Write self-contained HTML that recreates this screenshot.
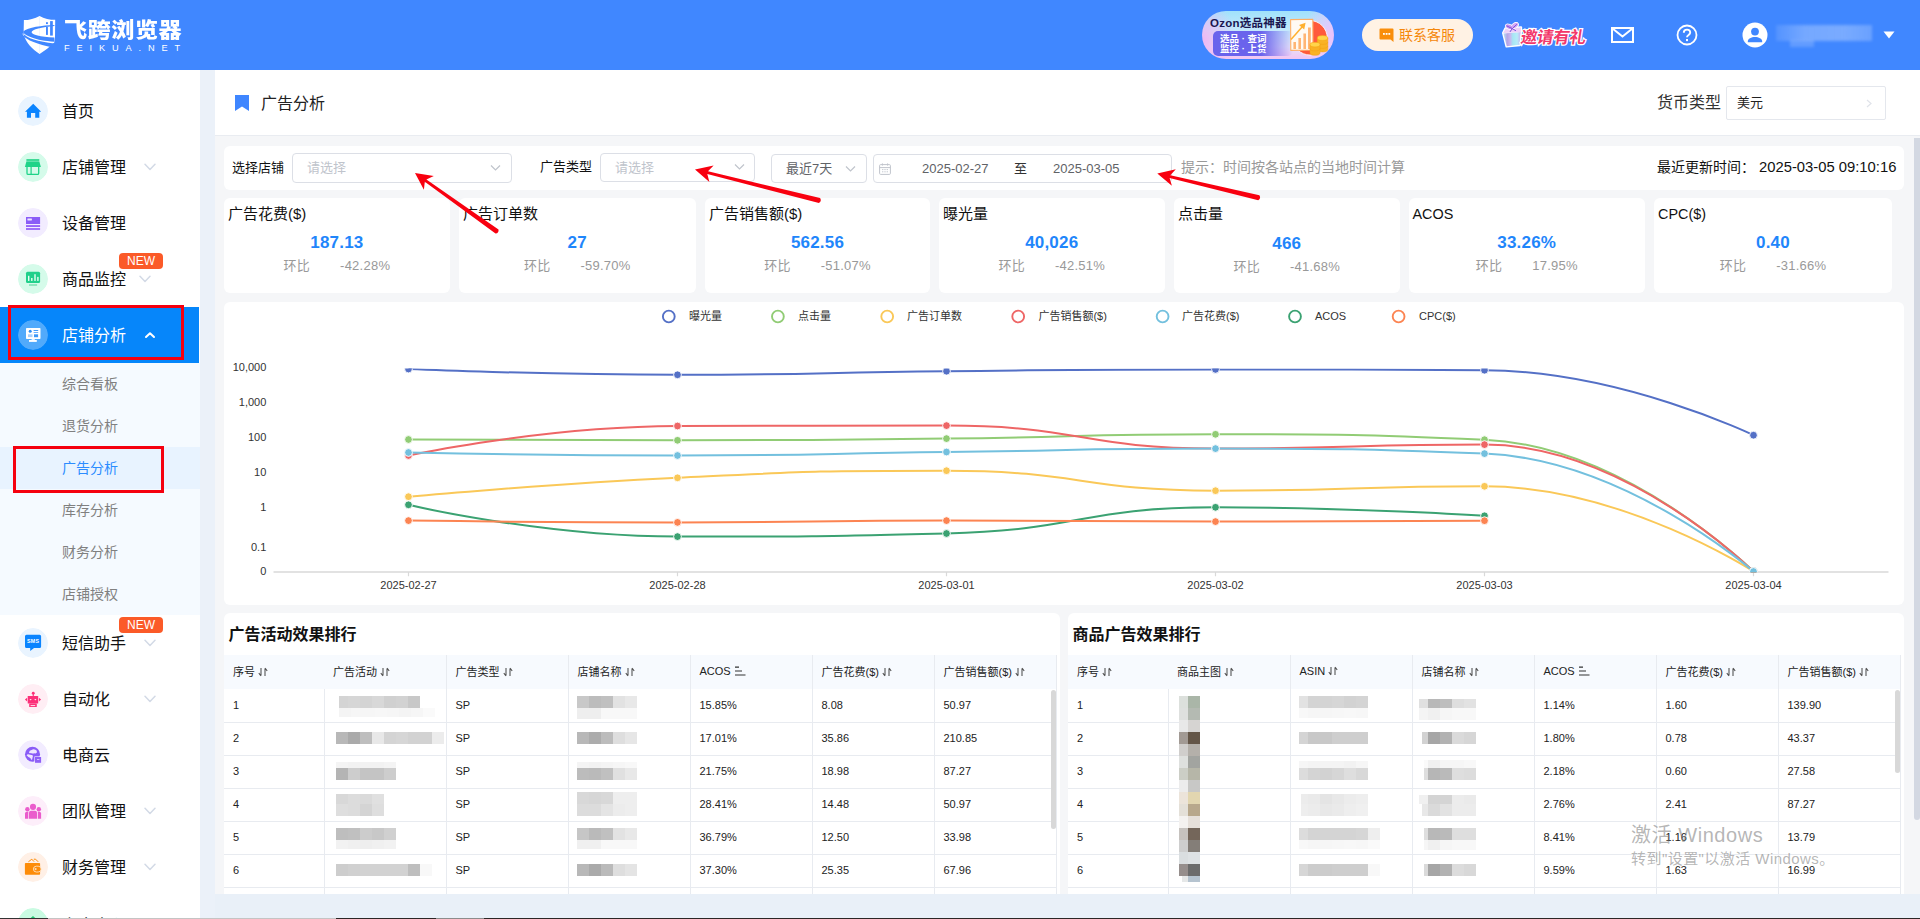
<!DOCTYPE html>
<html lang="zh-CN">
<head>
<meta charset="utf-8">
<title>广告分析</title>
<style>
*{box-sizing:border-box;margin:0;padding:0}
html,body{width:1920px;height:919px;overflow:hidden}
body{position:relative;font-family:"Liberation Sans","Noto Sans CJK SC",sans-serif;background:#f5f6f8;color:#111}
.abs{position:absolute}
#hdr{position:absolute;left:0;top:0;width:1920px;height:70px;background:#4087ff}
#side{position:absolute;left:0;top:70px;width:200px;height:849px;background:#fff;overflow:hidden}
#gap{position:absolute;left:200px;top:70px;width:15px;height:849px;background:#ebf1f9;z-index:5}
#main{position:absolute;left:214px;top:70px;width:1706px;height:849px;background:#f5f6f8;overflow:hidden}
.mi{position:absolute;left:0;width:199px;height:56px}
.mi .ic{position:absolute;left:18px;top:13px;width:30px;height:30px;border-radius:50%}
.mi .tx{position:absolute;left:62px;top:1px;line-height:56px;font-size:16px;color:#111;white-space:nowrap}
.mi .ar{position:absolute;top:22px;width:12px;height:12px}
.smi{position:absolute;left:0;width:200px;height:42px;line-height:43px;font-size:14px;color:#808080;padding-left:62px;white-space:nowrap}
.new{position:absolute;left:119px;width:44px;height:16px;background:#fb5a28;color:#fff;font-size:12px;line-height:17.6px;text-align:center;border-radius:4px}
.card{position:absolute;top:128px;height:95px;background:#fff;border-radius:6px}
.card .t{position:absolute;left:4px;top:6px;font-size:15px;color:#111;white-space:nowrap;line-height:20px}
.card .v{position:absolute;left:0;width:100%;top:34px;text-align:center;font-size:17px;letter-spacing:0.2px;font-weight:bold;color:#1f86fb;line-height:20px}
.card .c{position:absolute;left:0;width:100%;top:58px;text-align:center;font-size:13px;letter-spacing:0.25px;color:#999;line-height:18px;white-space:pre}
.panel{position:absolute;background:#fff;border-radius:6px}
.sel{position:absolute;border:1px solid #dcdfe6;border-radius:4px;background:#fff;font-size:13px;color:#c0c4cc;white-space:nowrap}
.lbl{position:absolute;font-size:13px;color:#111;white-space:nowrap}
table{border-collapse:collapse;table-layout:fixed;font-size:11px;color:#222}
th{height:34px;padding-bottom:3px;background:#f7fafe;text-align:left;padding-left:9px;font-weight:normal;color:#222;border-right:1px solid #e8ebf0;white-space:nowrap}
td{height:33px;padding-left:9px;padding-bottom:1px;border-right:1px solid #e8ebf0;border-bottom:1px solid #e8ebf0;white-space:nowrap;position:relative}
.blur{display:inline-block;vertical-align:middle;background:#d4d4d4;height:12px;filter:blur(1.2px)}
.mos{position:absolute;left:0;top:0;width:0;height:0;filter:blur(0.4px)}
.mos i{position:absolute;display:block}
.srt{display:inline-block;width:10px;height:10px;vertical-align:-1px;margin-left:3px}
</style>
</head>
<body>
<div id="hdr">
  <!-- logo -->
  <svg class="abs" style="left:18px;top:10px" width="44" height="50" viewBox="0 0 44 50">
    <path d="M21.6 5.9 C17 8.6 11 10 5.9 10.1 L5.6 24 C8 33 14 39 21.6 44 C25 42 28.5 39.5 31.5 36.8 L36.3 32.5 L37 27.7 L37.2 9.8 C32 9.8 26 8.6 21.6 5.9 Z" fill="#fff"/>
    <rect x="21.3" y="6" width="0.6" height="38" fill="#e6efff"/>
    <path d="M36.4 15 C24 15.4 10 17.3 5.2 21.6 C5 25 18 31 36.4 31.7 L36.4 27.6 C22 26.8 13.6 24.4 13.6 22.2 C13.6 19.6 24 17 36.4 16 Z" fill="#4087ff"/>
    <path d="M4 22.6 C9 28.5 20 32 36.4 33.4 L36.4 34.6 L34.6 37.4 C20 34.6 8.5 30.5 4 24.6 Z" fill="#4087ff"/>
    <path d="M4.2 23.2 C4.6 24.6 5.4 25.6 6.4 26.6 L5.6 24.4 Z" fill="#fff"/>
    <rect x="28" y="12.2" width="1.9" height="1.9" fill="#4087ff"/><rect x="28" y="16.9" width="1.9" height="8" fill="#4087ff"/>
    <rect x="32.1" y="11.1" width="2.7" height="14.5" fill="#4087ff"/>
  </svg>
  <div class="abs" style="left:63.5px;top:13.5px;font-size:21px;font-weight:900;color:#fff;letter-spacing:0.5px;line-height:28px;transform:scaleX(1.1);transform-origin:0 0;white-space:nowrap;font-family:'Noto Sans CJK SC','Liberation Sans',sans-serif">飞跨浏览器</div>
  <div class="abs" style="left:64px;top:42px;font-size:9.2px;color:#fff;letter-spacing:6.9px;line-height:12px;white-space:nowrap">FEIKUA.NET</div>

  <!-- ozon banner -->
  <div class="abs" style="left:1202px;top:11px;width:132px;height:48px;border-radius:24px;background:radial-gradient(ellipse 34px 44px at 0% 62%,#efb6f2 0%,rgba(239,182,242,0) 100%),radial-gradient(ellipse 30px 44px at 100% 50%,#ecc0fa 0%,rgba(236,192,250,0) 100%),linear-gradient(180deg,#a0e2fb 0%,#c4e8fc 40%,#e6e2fa 75%,#f2c4f2 100%);overflow:hidden">
    <div class="abs" style="left:8px;top:4.5px;font-size:11.5px;font-weight:bold;color:#1b1650;white-space:nowrap;line-height:14px;letter-spacing:0.25px">Ozon选品神器</div>
    <div class="abs" style="left:11px;top:20px;width:80px;height:25px;border-radius:5px;background:linear-gradient(90deg,#6a63ec 0%,#6a63ec 60%,rgba(140,140,240,0) 100%)"></div>
    <div class="abs" style="left:18px;top:22.7px;font-size:9.5px;font-weight:bold;color:#fff;white-space:nowrap;line-height:10.7px">选品 · 查词<br>监控 · 上货</div>
    <svg class="abs" style="left:84px;top:5px" width="46" height="42" viewBox="0 0 46 42">
      <circle cx="24" cy="21.8" r="17.2" fill="#ff5a3c" stroke="#fff" stroke-width="0.8"/>
      <path d="M4.6 3.6 L26.8 3.2 L27 34 L4.8 34.4 Z" fill="#fffaf4" stroke="#ffb066" stroke-width="1.1" stroke-linejoin="round"/>
      <rect x="7.4" y="26" width="2.6" height="7" fill="#ffb574"/><rect x="12.4" y="22" width="2.6" height="11" fill="#ffb574"/><rect x="17.4" y="17.5" width="2.6" height="15.5" fill="#ffb574"/><rect x="22" y="11.5" width="2.8" height="21.5" fill="#ffb574"/>
      <path d="M5 23.5 L16.5 10.5" stroke="#ffb02e" stroke-width="1.5" fill="none"/><path d="M13 9 L19.6 6.8 L18.2 13.4 Z" fill="#ffb02e"/>
      <g fill="#f9b224" stroke="#f5a010" stroke-width="0.5">
        <path d="M31.3 22 V33.5 A5.25 2.4 0 0 0 41.8 33.5 V22 Z"/><ellipse cx="36.55" cy="22" rx="5.25" ry="2.4" fill="#ffd54a"/>
        <path d="M31.3 26 A5.25 2.4 0 0 0 41.8 26 M31.3 30 A5.25 2.4 0 0 0 41.8 30" fill="none"/>
        <path d="M24 28.6 V37 A5 2.3 0 0 0 34 37 V28.6 Z"/><ellipse cx="29" cy="28.6" rx="5" ry="2.3" fill="#ffd54a"/>
        <path d="M24 32.6 A5 2.3 0 0 0 34 32.6" fill="none"/>
      </g>
    </svg>
  </div>

  <!-- contact -->
  <div class="abs" style="left:1362px;top:19px;width:111px;height:32px;border-radius:16px;background:#fff2e4">
    <svg class="abs" style="left:17px;top:9px" width="15" height="15" viewBox="0 0 15 15"><path d="M1.5 0.5 H13.5 Q14.5 0.5 14.5 1.5 V14 L11.5 11.5 H1.5 Q0.5 11.5 0.5 10.5 V1.5 Q0.5 0.5 1.5 0.5 Z" fill="#f98e0c"/><rect x="4" y="5" width="1.8" height="1.8" fill="#fff"/><rect x="6.7" y="5" width="1.8" height="1.8" fill="#fff"/><rect x="9.4" y="5" width="1.8" height="1.8" fill="#fff"/></svg>
    <div class="abs" style="left:37px;top:0;line-height:32px;font-size:14px;color:#f5870a;white-space:nowrap">联系客服</div>
  </div>

  <!-- invite -->
  <svg class="abs" style="left:1500px;top:22px" width="24" height="26" viewBox="0 0 24 26">
    <defs><linearGradient id="gb" x1="0" y1="0" x2="1" y2="0"><stop offset="0" stop-color="#b9e6f6"/><stop offset="0.22" stop-color="#b4a4e6"/><stop offset="0.4" stop-color="#c9b6f0"/><stop offset="0.55" stop-color="#a6e6f4"/><stop offset="0.8" stop-color="#b6ecf8"/><stop offset="1" stop-color="#c8b4f2"/></linearGradient></defs>
    <path d="M3.2 11 L5.4 6.4 L21 5.4 L20.8 10.4 L19.8 23 L6.6 24.4 Z" fill="#fff" stroke="#fff" stroke-width="2.4" stroke-linejoin="round"/>
    <path d="M3.4 11.4 L20.6 10 L19.6 22.8 L6.8 24.2 Z" fill="url(#gb)"/>
    <path d="M3.2 11 L5.6 6.4 L21 5.4 L20.7 10.2 Z" fill="#ecd0f8"/>
    <g stroke="#fff" stroke-width="1.6"><ellipse cx="9" cy="4.6" rx="3.4" ry="2" transform="rotate(22 9 4.6)" fill="#c596f2"/><ellipse cx="15" cy="3.4" rx="3.4" ry="2.1" transform="rotate(-32 15 3.4)" fill="#c596f2"/></g>
    <ellipse cx="9" cy="4.6" rx="3.4" ry="2" transform="rotate(22 9 4.6)" fill="#c596f2"/><ellipse cx="15" cy="3.4" rx="3.4" ry="2.1" transform="rotate(-32 15 3.4)" fill="#d2a8f6"/>
    <path d="M7 4 L12.2 6.6 L16.6 2.6 M12.2 6.6 L10.2 9.6 M12.2 6.6 L15.6 8.6" stroke="#7d4fdc" stroke-width="1" fill="none" stroke-linecap="round"/>
  </svg>
  <div class="abs" style="left:1521px;top:22.5px;font-size:16.5px;font-weight:bold;transform:skewX(-9deg);color:#f2386a;white-space:nowrap;line-height:26px;letter-spacing:-0.2px;-webkit-text-stroke:2.4px #fff;paint-order:stroke fill;font-family:'Noto Sans CJK SC',sans-serif">邀请有礼</div>

  <!-- mail -->
  <svg class="abs" style="left:1611px;top:27px" width="23" height="16" viewBox="0 0 23 16"><rect x="1" y="1" width="21" height="14" fill="none" stroke="#fff" stroke-width="2"/><path d="M1.5 1.5 L11.5 9.5 L21.5 1.5" fill="none" stroke="#fff" stroke-width="2"/></svg>
  <!-- help -->
  <svg class="abs" style="left:1675.6px;top:24px" width="22" height="22" viewBox="0 0 22 22"><circle cx="11" cy="11" r="9.5" fill="none" stroke="#fff" stroke-width="1.8"/><path d="M7.8 8.7 C7.8 4.6 14.2 4.6 14.2 8.5 C14.2 11 11 10.8 11 13.3" fill="none" stroke="#fff" stroke-width="1.9"/><rect x="10" y="15" width="2" height="2.1" fill="#fff"/></svg>
  <!-- avatar -->
  <svg class="abs" style="left:1742px;top:22px" width="26" height="26" viewBox="0 0 26 26"><circle cx="13" cy="13" r="12.5" fill="#fff"/><circle cx="13" cy="9.6" r="3.9" fill="#4087ff"/><path d="M5.8 19.5 C5.8 13.5 20.2 13.5 20.2 19.5 V20.3 H5.8 Z" fill="#4087ff"/></svg>
  <div class="abs" style="left:1776px;top:25px;width:96px;height:16px;background:linear-gradient(90deg,rgba(255,255,255,0.1),rgba(255,255,255,0.28) 30%,rgba(255,255,255,0.3) 70%,rgba(255,255,255,0.22));filter:blur(1.5px)"></div>
  <div class="abs" style="left:1790px;top:40px;width:24px;height:7px;background:rgba(255,255,255,0.18);filter:blur(1.5px)"></div>
  <svg class="abs" style="left:1883px;top:31px" width="12" height="8" viewBox="0 0 12 8"><path d="M0.5 0.5 H11.5 L6 7.5 Z" fill="#fff"/></svg>
</div>
<div id="side">
<div class="abs" style="left:0;top:293px;width:200px;height:252px;background:#f5faff"></div>
<div class="abs" style="left:0;top:377px;width:200px;height:42px;background:#e8f3ff"></div>
<div class="mi" style="top:13px"><svg class="ic" viewBox="0 0 30 30"><circle cx="15" cy="15" r="15" fill="#e9f4ff"/><path d="M15.25 7.7 L23.2 15.8 H21.3 V21.8 H17.2 V17 H13 V21.8 H8.9 V15.8 H7 Z" fill="#0a84ff"/></svg><div class="tx">首页</div></div>
<div class="mi" style="top:69px"><svg class="ic" viewBox="0 0 30 30"><circle cx="15" cy="15" r="15" fill="#d5fbea"/><rect x="8.4" y="7" width="12.9" height="2.3" fill="#3fd996"/><path d="M8.4 9.6 H21.3 L22.9 15 H6.9 Z" fill="#1fd388"/><path d="M9 15 V21.2 Q9 22.4 10.2 22.4 H19.5 Q20.7 22.4 20.7 21.2 V15" fill="none" stroke="#1fd388" stroke-width="1.3"/><rect x="12.5" y="15" width="1.2" height="7.4" fill="#1fd388"/></svg><div class="tx">店铺管理</div><svg class="ar" style="left:144px" viewBox="0 0 12 12"><path d="M1 3.2 L6 8.5 L11 3.2" fill="none" stroke="#d3dae6" stroke-width="1.5" stroke-linecap="round" stroke-linejoin="round"/></svg></div>
<div class="mi" style="top:125px"><svg class="ic" viewBox="0 0 30 30"><circle cx="15" cy="15" r="15" fill="#f2ecff"/><rect x="8" y="9" width="14.1" height="7" fill="#8a5cf7"/><rect x="9.4" y="10.4" width="4.5" height="2.1" rx="0.4" fill="#ece3ff"/><rect x="8" y="17.1" width="14.1" height="1.9" fill="#9663f8"/><rect x="8" y="20.1" width="14.1" height="1.8" fill="#9663f8"/></svg><div class="tx">设备管理</div></div>
<div class="mi" style="top:181px"><svg class="ic" viewBox="0 0 30 30"><circle cx="15" cy="15" r="15" fill="#d5fbea"/><rect x="8" y="7.8" width="14.1" height="11.2" rx="1.5" fill="#21d08b"/><rect x="10" y="11.8" width="1.4" height="5.1" fill="#eafff4"/><rect x="13.1" y="14" width="1.4" height="2.9" fill="#eafff4"/><rect x="16.3" y="10.2" width="1.4" height="6.7" fill="#eafff4"/><rect x="19.2" y="12.9" width="1.4" height="4" fill="#eafff4"/><rect x="11" y="20.2" width="8.1" height="1.6" fill="#7fe0b5"/></svg><div class="tx">商品监控</div><svg class="ar" style="left:139px" viewBox="0 0 12 12"><path d="M1 3.2 L6 8.5 L11 3.2" fill="none" stroke="#d3dae6" stroke-width="1.5" stroke-linecap="round" stroke-linejoin="round"/></svg><div class="new" style="top:2px">NEW</div></div>
<div class="mi" style="top:237px;background:#0686fa"><svg class="ic" viewBox="0 0 30 30"><circle cx="15" cy="15" r="15" fill="rgba(255,255,255,0.3)"/><rect x="8" y="8" width="14.5" height="11" rx="0.8" fill="#fff"/><circle cx="12.2" cy="11.3" r="1.5" fill="#2f8ff5"/><rect x="15.6" y="10.1" width="4.6" height="0.9" fill="#2f8ff5"/><rect x="15.6" y="12" width="4.6" height="0.9" fill="#5aa9ff"/><rect x="10" y="14.3" width="4.5" height="2.8" fill="#a9d0fb"/><rect x="16" y="14.3" width="4.1" height="2.9" fill="#3d97f6"/><rect x="13.6" y="19" width="3.2" height="1.2" fill="#e6f2ff"/><rect x="11" y="20" width="7.8" height="1.9" fill="#fff"/></svg><div class="tx" style="color:#fff">店铺分析</div><svg class="ar" style="left:144px" viewBox="0 0 12 12"><path d="M2 8 L6 4.2 L10 8" fill="none" stroke="#fff" stroke-width="2" stroke-linecap="round" stroke-linejoin="round"/></svg></div>
<div class="mi" style="top:545px"><svg class="ic" viewBox="0 0 30 30"><circle cx="15" cy="15" r="15" fill="#e9f4ff"/><path d="M8.5 6.8 H21.6 Q23.1 6.8 23.1 8.3 V18.5 Q23.1 20 21.6 20 H16 L12.2 23.1 V20 H8.5 Q7 20 7 18.5 V8.3 Q7 6.8 8.5 6.8 Z" fill="#0a84ff"/><text x="15.2" y="15.4" font-size="5.3" font-weight="bold" fill="#fff" text-anchor="middle" font-family="Liberation Sans,sans-serif" letter-spacing="0.3">SMS</text></svg><div class="tx">短信助手</div><svg class="ar" style="left:144px" viewBox="0 0 12 12"><path d="M1 3.2 L6 8.5 L11 3.2" fill="none" stroke="#d3dae6" stroke-width="1.5" stroke-linecap="round" stroke-linejoin="round"/></svg><div class="new" style="top:2px">NEW</div></div>
<div class="mi" style="top:601px"><svg class="ic" viewBox="0 0 30 30"><circle cx="15" cy="15" r="15" fill="#ffeef4"/><circle cx="15.25" cy="9.2" r="1.45" fill="#fc2f78"/><rect x="14.7" y="10" width="1.1" height="2.4" fill="#fc2f78"/><rect x="9.7" y="12" width="10.5" height="7.5" rx="0.6" fill="#fc2f78"/><path d="M6.9 15.6 L9.15 13.7 V17.5 Z" fill="#fc2f78"/><path d="M23.1 15.6 L20.9 13.7 V17.5 Z" fill="#fc2f78"/><path d="M11.5 14.9 H13.7 L12.6 16.5 Z" fill="#ffe3ec"/><path d="M16.3 14.9 H18.5 L17.4 16.5 Z" fill="#ffe3ec"/><rect x="11.2" y="19.4" width="7.6" height="3.7" rx="0.6" fill="#fc2f78"/><rect x="12.6" y="21.1" width="4.6" height="1" fill="#ffe3ec"/></svg><div class="tx">自动化</div><svg class="ar" style="left:144px" viewBox="0 0 12 12"><path d="M1 3.2 L6 8.5 L11 3.2" fill="none" stroke="#d3dae6" stroke-width="1.5" stroke-linecap="round" stroke-linejoin="round"/></svg></div>
<div class="mi" style="top:657px"><svg class="ic" viewBox="0 0 30 30"><circle cx="15" cy="15" r="15" fill="#f2ecff"/><circle cx="14.5" cy="14.3" r="7.5" fill="#8a5cf7"/><path d="M11 12.6 Q11.2 10.2 13.6 10 Q15.4 8.6 17.4 9.8 Q19.4 10.6 18.9 12.6 Q18 13.8 16.6 13.2 Q14.4 13.9 13 13 Q11.4 13.4 11 12.6 Z" fill="#efe6ff"/><path d="M8.6 15.2 Q9.4 14 11 14.4 L14.6 15.2 Q15.2 16 14.6 17.4 L14 20 Q12.6 19.6 12.4 18 Q10.2 17.4 8.6 15.2 Z" fill="#efe6ff"/><rect x="16.4" y="16.4" width="7.3" height="7" fill="#f2ecff"/><rect x="17" y="17" width="6.1" height="5.8" fill="#8f60f7"/><rect x="19" y="19" width="2.4" height="0.9" fill="#d9c8ff"/></svg><div class="tx">电商云</div></div>
<div class="mi" style="top:713px"><svg class="ic" viewBox="0 0 30 30"><circle cx="15" cy="15" r="15" fill="#fdeefa"/><circle cx="15" cy="10.9" r="3.05" fill="#ea5ccc"/><path d="M11 22.7 V16.7 Q11 14.7 13 14.7 H17 Q19 14.7 19 16.7 V22.7 Z" fill="#ea5ccc"/><circle cx="9.4" cy="13.3" r="2.2" fill="#ea5ccc"/><path d="M7 22.7 V17.6 Q7 15.8 8.8 15.8 H10.3 V22.7 Z" fill="#ea5ccc"/><circle cx="20.8" cy="13.3" r="2.2" fill="#ea5ccc"/><path d="M23.1 22.7 V17.6 Q23.1 15.8 21.3 15.8 H19.8 V22.7 Z" fill="#ea5ccc"/></svg><div class="tx">团队管理</div><svg class="ar" style="left:144px" viewBox="0 0 12 12"><path d="M1 3.2 L6 8.5 L11 3.2" fill="none" stroke="#d3dae6" stroke-width="1.5" stroke-linecap="round" stroke-linejoin="round"/></svg></div>
<div class="mi" style="top:769px"><svg class="ic" viewBox="0 0 30 30"><circle cx="15" cy="15" r="15" fill="#fff0e6"/><path d="M10.4 9.8 L13.8 7.2 L16 9.6 M15.8 7.2 L17.6 7.2 L20.2 9.8" fill="none" stroke="#fd8c08" stroke-width="1"/><rect x="6.9" y="10.9" width="15.2" height="11.9" rx="0.8" fill="#fd8c08"/><rect x="15.4" y="14.2" width="7.7" height="5.8" rx="2.9" fill="#fd8c08" stroke="#ffe3c4" stroke-width="0.9"/><circle cx="17.6" cy="17.1" r="1.1" fill="#ffd9ae"/></svg><div class="tx">财务管理</div><svg class="ar" style="left:144px" viewBox="0 0 12 12"><path d="M1 3.2 L6 8.5 L11 3.2" fill="none" stroke="#d3dae6" stroke-width="1.5" stroke-linecap="round" stroke-linejoin="round"/></svg></div>
<div class="mi" style="top:825px"><svg class="ic" viewBox="0 0 30 30"><circle cx="15" cy="15" r="15" fill="#c9fbe2"/><path d="M15 8 L7.5 14.8 H22.5 Z" fill="#25c873"/></svg><div class="tx" style="top:2.6px">安全中心</div><svg class="ar" style="left:144px" viewBox="0 0 12 12"><path d="M1 3.2 L6 8.5 L11 3.2" fill="none" stroke="#d3dae6" stroke-width="1.5" stroke-linecap="round" stroke-linejoin="round"/></svg></div>
<div class="smi" style="top:293px">综合看板</div>
<div class="smi" style="top:335px">退货分析</div>
<div class="smi" style="top:377px;color:#2b8cff">广告分析</div>
<div class="smi" style="top:419px">库存分析</div>
<div class="smi" style="top:461px">财务分析</div>
<div class="smi" style="top:503px">店铺授权</div>
</div>
<div class="abs" style="left:8px;top:305px;width:176px;height:55px;border:3px solid #f5000f;z-index:20"></div>
<div class="abs" style="left:13px;top:446px;width:151px;height:47px;border:3px solid #f5000f;z-index:20"></div>
<div id="gap"></div>
<div id="main">
<div class="abs" style="left:0;top:0;width:1706px;height:66px;background:#fff;border-bottom:1px solid #e9ecf1"></div>
<svg class="abs" style="left:21px;top:25px" width="14" height="16" viewBox="0 0 14 16"><path d="M0 0 H14 V16 L7 11.6 L0 16 Z" fill="#3f86ff"/></svg>
<div class="abs" style="left:47px;top:22px;font-size:16px;line-height:24px;color:#222;white-space:nowrap">广告分析</div>
<div class="abs" style="left:1443px;top:21.3px;font-size:16px;line-height:24px;color:#333;white-space:nowrap">货币类型</div>
<div class="sel" style="left:1512px;top:16px;width:160px;height:34px;border-color:#e4e7ed;border-radius:2px;color:#222;font-size:13px;line-height:32px;padding-left:10px">美元<svg class="abs" style="right:13px;top:12px" width="6" height="9" viewBox="0 0 6 9"><path d="M1 1 L5 4.5 L1 8" fill="none" stroke="#e0e3ea" stroke-width="1.2"/></svg></div>
<div class="panel" style="left:10px;top:76px;width:1680px;height:44px"></div>
<div class="lbl" style="left:18px;top:88px;line-height:20px">选择店铺</div>
<div class="sel" style="left:78px;top:83px;width:220px;height:30px;line-height:28px;padding-left:14px">请选择<svg class="abs" style="right:10px;top:10px" width="11" height="8" viewBox="0 0 11 8"><path d="M1 1.5 L5.5 6 L10 1.5" fill="none" stroke="#c0c4cc" stroke-width="1.2"/></svg></div>
<div class="lbl" style="left:326px;top:87px;line-height:20px">广告类型</div>
<div class="sel" style="left:386px;top:83px;width:155px;height:29px;line-height:27px;padding-left:14px">请选择<svg class="abs" style="right:9px;top:9px" width="11" height="8" viewBox="0 0 11 8"><path d="M1 1.5 L5.5 6 L10 1.5" fill="none" stroke="#c0c4cc" stroke-width="1.2"/></svg></div>
<div class="sel" style="left:557px;top:84px;width:96px;height:29px;line-height:27px;padding-left:14px;color:#606266">最近7天<svg class="abs" style="right:10px;top:10px" width="11" height="8" viewBox="0 0 11 8"><path d="M1 1.5 L5.5 6 L10 1.5" fill="none" stroke="#c0c4cc" stroke-width="1.2"/></svg></div>
<div class="sel" style="left:659px;top:84px;width:299px;height:29px;line-height:27px;color:#606266"><svg class="abs" style="left:5px;top:8px" width="12" height="12" viewBox="0 0 12 12"><rect x="0.6" y="1.6" width="10.8" height="9.8" rx="1" fill="none" stroke="#c0c4cc" stroke-width="1"/><path d="M0.6 4.6 H11.4 M3.4 0.4 V2.6 M8.6 0.4 V2.6" stroke="#c0c4cc" stroke-width="1" fill="none"/><path d="M3 6.6 H9 M3 8.8 H9" stroke="#c0c4cc" stroke-width="0.9" stroke-dasharray="1.4 0.9"/></svg><span class="abs" style="left:48px;top:0">2025-02-27</span><span class="abs" style="left:140px;top:0;color:#333">至</span><span class="abs" style="left:179px;top:0">2025-03-05</span></div>
<div class="abs" style="left:967px;top:87px;font-size:14px;line-height:20px;color:#999;white-space:nowrap">提示：时间按各站点的当地时间计算</div>
<div class="abs" style="left:1443px;top:87px;font-size:14px;line-height:20px;color:#111;white-space:nowrap">最近更新时间：<span style="font-size:14.8px;margin-left:4px">2025-03-05 09:10:16</span></div>
<div class="card" style="left:10px;width:225.8px"><div class="t">广告花费($)</div><div class="v" style="top:35px">187.13</div><div class="c" style="top:59px">环比<span style="display:inline-block;width:30px"></span>-42.28%</div></div>
<div class="card" style="left:245px;width:236.5px"><div class="t">广告订单数</div><div class="v" style="top:35px">27</div><div class="c" style="top:59px">环比<span style="display:inline-block;width:30px"></span>-59.70%</div></div>
<div class="card" style="left:491px;width:225px"><div class="t">广告销售额($)</div><div class="v" style="top:35px">562.56</div><div class="c" style="top:59px">环比<span style="display:inline-block;width:30px"></span>-51.07%</div></div>
<div class="card" style="left:725px;width:225.5px"><div class="t">曝光量</div><div class="v" style="top:35px">40,026</div><div class="c" style="top:59px">环比<span style="display:inline-block;width:30px"></span>-42.51%</div></div>
<div class="card" style="left:960px;width:225.5px"><div class="t">点击量</div><div class="v" style="top:36px">466</div><div class="c" style="top:60px">环比<span style="display:inline-block;width:30px"></span>-41.68%</div></div>
<div class="card" style="left:1194.5px;width:236.5px"><div class="t"><span style="font-size:14.4px">ACOS</span></div><div class="v" style="top:35px">33.26%</div><div class="c" style="top:59px">环比<span style="display:inline-block;width:30px"></span>17.95%</div></div>
<div class="card" style="left:1440px;width:238px"><div class="t"><span style="font-size:14.4px">CPC($)</span></div><div class="v" style="top:35px">0.40</div><div class="c" style="top:59px">环比<span style="display:inline-block;width:30px"></span>-31.66%</div></div>
<svg class="abs" style="left:0;top:0;z-index:30;pointer-events:none" width="1706" height="300" viewBox="0 0 1706 300"><path d="M201.0 103.0 L209.9 119.8 L210.8 111.7 L281.5 163.6 Q285.1 163.0 284.5 159.4 L212.4 109.4 L219.8 106.0 Z" fill="#f8000f"/><path d="M481.0 99.5 L495.4 111.9 L493.3 104.0 L604.9 133.0 Q608.0 131.1 606.1 128.0 L494.0 101.3 L499.6 95.4 Z" fill="#f8000f"/><path d="M943.3 103.5 L957.9 115.7 L955.6 107.9 L1044.2 130.3 Q1047.3 128.4 1045.4 125.3 L956.3 105.2 L961.8 99.2 Z" fill="#f8000f"/></svg>
<div class="panel" style="left:10px;top:232px;width:1680px;height:303px">
<svg class="abs" style="left:0;top:0" width="1680" height="303" viewBox="224 302 1680 303" font-family="Liberation Sans,Noto Sans CJK SC,sans-serif">
<defs><clipPath id="gc"><rect x="270" y="368.6" width="1630" height="203.8"/></clipPath></defs>
<path d="M273.5 572 H1888.5" stroke="#d9d9d9" stroke-width="1.4" fill="none"/>
<path d="M408.5 572 V576.2 M677.5 572 V576.2 M946.5 572 V576.2 M1215.5 572 V576.2 M1484.5 572 V576.2 M1753.5 572 V576.2" stroke="#d9d9d9" stroke-width="1.2" fill="none"/>
<text x="266.3" y="370.9" font-size="11" fill="#333" text-anchor="end">10,000</text>
<text x="266.3" y="405.9" font-size="11" fill="#333" text-anchor="end">1,000</text>
<text x="266.3" y="440.9" font-size="11" fill="#333" text-anchor="end">100</text>
<text x="266.3" y="476.2" font-size="11" fill="#333" text-anchor="end">10</text>
<text x="266.3" y="510.9" font-size="11" fill="#333" text-anchor="end">1</text>
<text x="266.3" y="551.2" font-size="11" fill="#333" text-anchor="end">0.1</text>
<text x="266.3" y="575.2" font-size="11" fill="#333" text-anchor="end">0</text>
<text x="408.5" y="589" font-size="11" fill="#333" text-anchor="middle">2025-02-27</text>
<text x="677.5" y="589" font-size="11" fill="#333" text-anchor="middle">2025-02-28</text>
<text x="946.5" y="589" font-size="11" fill="#333" text-anchor="middle">2025-03-01</text>
<text x="1215.5" y="589" font-size="11" fill="#333" text-anchor="middle">2025-03-02</text>
<text x="1484.5" y="589" font-size="11" fill="#333" text-anchor="middle">2025-03-03</text>
<text x="1753.5" y="589" font-size="11" fill="#333" text-anchor="middle">2025-03-04</text>
<circle cx="668.8" cy="316.5" r="5.9" fill="#fff" stroke="#5470c6" stroke-width="1.9"/><text x="689" y="320.3" font-size="11" fill="#333">曝光量</text>
<circle cx="777.9" cy="316.5" r="5.9" fill="#fff" stroke="#91cc75" stroke-width="1.9"/><text x="798" y="320.3" font-size="11" fill="#333">点击量</text>
<circle cx="887.2" cy="316.5" r="5.9" fill="#fff" stroke="#fac858" stroke-width="1.9"/><text x="907" y="320.3" font-size="11" fill="#333">广告订单数</text>
<circle cx="1018.2" cy="316.5" r="5.9" fill="#fff" stroke="#ee6666" stroke-width="1.9"/><text x="1038.4" y="320.3" font-size="11" fill="#333">广告销售额($)</text>
<circle cx="1162.6" cy="316.5" r="5.9" fill="#fff" stroke="#73c0de" stroke-width="1.9"/><text x="1182" y="320.3" font-size="11" fill="#333">广告花费($)</text>
<circle cx="1295" cy="316.5" r="5.9" fill="#fff" stroke="#3ba272" stroke-width="1.9"/><text x="1315" y="320.3" font-size="11" fill="#333">ACOS</text>
<circle cx="1398.6" cy="316.5" r="5.9" fill="#fff" stroke="#fc8452" stroke-width="1.9"/><text x="1419" y="320.3" font-size="11" fill="#333">CPC($)</text>
<g clip-path="url(#gc)">
<path d="M408.5 369.0 C408.5 369.0 543.0 374.8 677.5 374.8 C812.0 374.8 812.0 372.6 946.5 371.2 C1081.0 369.9 1081.0 369.4 1215.5 369.4 C1350.0 369.4 1351.9 369.4 1484.5 370.2 C1620.9 371.0 1753.5 435.2 1753.5 435.2" fill="none" stroke="#5470c6" stroke-width="2" stroke-linejoin="round"/>
<path d="M408.5 439.5 C408.5 439.5 543.0 440.3 677.5 440.3 C812.0 440.3 812.0 440.1 946.5 438.6 C1081.0 437.1 1081.0 434.3 1215.5 434.3 C1350.0 434.3 1357.2 434.3 1484.5 439.7 C1626.2 445.7 1753.5 571.5 1753.5 571.5" fill="none" stroke="#91cc75" stroke-width="2" stroke-linejoin="round"/>
<path d="M408.5 496.7 C408.5 496.7 542.9 484.3 677.5 477.8 C811.9 471.3 812.2 470.7 946.5 470.7 C1081.2 470.7 1080.8 490.7 1215.5 490.7 C1349.8 490.7 1353.2 486.3 1484.5 486.3 C1622.2 486.3 1753.5 571.5 1753.5 571.5" fill="none" stroke="#fac858" stroke-width="2" stroke-linejoin="round"/>
<path d="M408.5 455.5 C408.5 455.5 542.6 426.4 677.5 426.0 C811.6 425.6 812.2 425.6 946.5 425.6 C1081.2 425.6 1080.8 448.6 1215.5 448.6 C1349.8 448.6 1356.7 444.6 1484.5 444.6 C1625.7 444.6 1753.5 571.5 1753.5 571.5" fill="none" stroke="#ee6666" stroke-width="2" stroke-linejoin="round"/>
<path d="M408.5 452.5 C408.5 452.5 543.0 455.5 677.5 455.5 C812.0 455.5 812.0 453.7 946.5 452.0 C1081.0 450.3 1081.0 448.6 1215.5 448.6 C1350.0 448.6 1355.9 448.6 1484.5 453.6 C1624.9 459.1 1753.5 571.5 1753.5 571.5" fill="none" stroke="#73c0de" stroke-width="2" stroke-linejoin="round"/>
<path d="M408.5 504.8 C408.5 504.8 542.5 536.6 677.5 536.6 C811.5 536.6 812.3 536.6 946.5 533.5 C1081.3 530.4 1080.7 507.3 1215.5 507.3 C1349.7 507.3 1484.5 515.8 1484.5 515.8" fill="none" stroke="#3ba272" stroke-width="2" stroke-linejoin="round"/>
<path d="M408.5 520.6 C408.5 520.6 543.0 522.4 677.5 522.4 C812.0 522.4 812.0 520.6 946.5 520.6 C1081.0 520.6 1081.0 521.6 1215.5 521.6 C1350.0 521.6 1484.5 520.7 1484.5 520.7" fill="none" stroke="#fc8452" stroke-width="2" stroke-linejoin="round"/>
<circle cx="408.5" cy="369.0" r="3.9" fill="#5470c6" stroke="#fff" stroke-width="0.9"/>
<circle cx="677.5" cy="374.8" r="3.9" fill="#5470c6" stroke="#fff" stroke-width="0.9"/>
<circle cx="946.5" cy="371.2" r="3.9" fill="#5470c6" stroke="#fff" stroke-width="0.9"/>
<circle cx="1215.5" cy="369.4" r="3.9" fill="#5470c6" stroke="#fff" stroke-width="0.9"/>
<circle cx="1484.5" cy="370.2" r="3.9" fill="#5470c6" stroke="#fff" stroke-width="0.9"/>
<circle cx="1753.5" cy="435.2" r="3.9" fill="#5470c6" stroke="#fff" stroke-width="0.9"/>
<circle cx="408.5" cy="439.5" r="3.9" fill="#91cc75" stroke="#fff" stroke-width="0.9"/>
<circle cx="677.5" cy="440.3" r="3.9" fill="#91cc75" stroke="#fff" stroke-width="0.9"/>
<circle cx="946.5" cy="438.6" r="3.9" fill="#91cc75" stroke="#fff" stroke-width="0.9"/>
<circle cx="1215.5" cy="434.3" r="3.9" fill="#91cc75" stroke="#fff" stroke-width="0.9"/>
<circle cx="1484.5" cy="439.7" r="3.9" fill="#91cc75" stroke="#fff" stroke-width="0.9"/>
<circle cx="1753.5" cy="571.5" r="3.9" fill="#91cc75" stroke="#fff" stroke-width="0.9"/>
<circle cx="408.5" cy="496.7" r="3.9" fill="#fac858" stroke="#fff" stroke-width="0.9"/>
<circle cx="677.5" cy="477.8" r="3.9" fill="#fac858" stroke="#fff" stroke-width="0.9"/>
<circle cx="946.5" cy="470.7" r="3.9" fill="#fac858" stroke="#fff" stroke-width="0.9"/>
<circle cx="1215.5" cy="490.7" r="3.9" fill="#fac858" stroke="#fff" stroke-width="0.9"/>
<circle cx="1484.5" cy="486.3" r="3.9" fill="#fac858" stroke="#fff" stroke-width="0.9"/>
<circle cx="1753.5" cy="571.5" r="3.9" fill="#fac858" stroke="#fff" stroke-width="0.9"/>
<circle cx="408.5" cy="455.5" r="3.9" fill="#ee6666" stroke="#fff" stroke-width="0.9"/>
<circle cx="677.5" cy="426.0" r="3.9" fill="#ee6666" stroke="#fff" stroke-width="0.9"/>
<circle cx="946.5" cy="425.6" r="3.9" fill="#ee6666" stroke="#fff" stroke-width="0.9"/>
<circle cx="1215.5" cy="448.6" r="3.9" fill="#ee6666" stroke="#fff" stroke-width="0.9"/>
<circle cx="1484.5" cy="444.6" r="3.9" fill="#ee6666" stroke="#fff" stroke-width="0.9"/>
<circle cx="1753.5" cy="571.5" r="3.9" fill="#ee6666" stroke="#fff" stroke-width="0.9"/>
<circle cx="408.5" cy="452.5" r="3.9" fill="#73c0de" stroke="#fff" stroke-width="0.9"/>
<circle cx="677.5" cy="455.5" r="3.9" fill="#73c0de" stroke="#fff" stroke-width="0.9"/>
<circle cx="946.5" cy="452.0" r="3.9" fill="#73c0de" stroke="#fff" stroke-width="0.9"/>
<circle cx="1215.5" cy="448.6" r="3.9" fill="#73c0de" stroke="#fff" stroke-width="0.9"/>
<circle cx="1484.5" cy="453.6" r="3.9" fill="#73c0de" stroke="#fff" stroke-width="0.9"/>
<circle cx="1753.5" cy="571.5" r="3.9" fill="#73c0de" stroke="#fff" stroke-width="0.9"/>
<circle cx="408.5" cy="504.8" r="3.9" fill="#3ba272" stroke="#fff" stroke-width="0.9"/>
<circle cx="677.5" cy="536.6" r="3.9" fill="#3ba272" stroke="#fff" stroke-width="0.9"/>
<circle cx="946.5" cy="533.5" r="3.9" fill="#3ba272" stroke="#fff" stroke-width="0.9"/>
<circle cx="1215.5" cy="507.3" r="3.9" fill="#3ba272" stroke="#fff" stroke-width="0.9"/>
<circle cx="1484.5" cy="515.8" r="3.9" fill="#3ba272" stroke="#fff" stroke-width="0.9"/>
<circle cx="408.5" cy="520.6" r="3.9" fill="#fc8452" stroke="#fff" stroke-width="0.9"/>
<circle cx="677.5" cy="522.4" r="3.9" fill="#fc8452" stroke="#fff" stroke-width="0.9"/>
<circle cx="946.5" cy="520.6" r="3.9" fill="#fc8452" stroke="#fff" stroke-width="0.9"/>
<circle cx="1215.5" cy="521.6" r="3.9" fill="#fc8452" stroke="#fff" stroke-width="0.9"/>
<circle cx="1484.5" cy="520.7" r="3.9" fill="#fc8452" stroke="#fff" stroke-width="0.9"/>
</g>
</svg></div>
<div class="panel" style="left:10px;top:543px;width:836px;height:300px;overflow:hidden">
<div class="abs" style="left:4.5px;top:10px;font-size:16px;font-weight:bold;line-height:24px;color:#111;white-space:nowrap">广告活动效果排行</div>
<div class="abs" style="left:0;top:42px;width:832px;height:1px;background:#e8ebf0"></div>
<table class="abs" style="left:0;top:42px;width:832px"><colgroup><col style="width:100px"><col style="width:122px"><col style="width:122px"><col style="width:122px"><col style="width:122px"><col style="width:122px"><col style="width:122px"></colgroup>
<tr><th style="border-right:none">序号<svg class="srt" viewBox="0 0 10 10"><path d="M3 1 V8.6 M0.8 6.2 L3 8.8 M7 9 V1.4 M7 1.2 L9.2 3.8" fill="none" stroke="#555" stroke-width="1.1"/></svg></th><th>广告活动<svg class="srt" viewBox="0 0 10 10"><path d="M3 1 V8.6 M0.8 6.2 L3 8.8 M7 9 V1.4 M7 1.2 L9.2 3.8" fill="none" stroke="#555" stroke-width="1.1"/></svg></th><th>广告类型<svg class="srt" viewBox="0 0 10 10"><path d="M3 1 V8.6 M0.8 6.2 L3 8.8 M7 9 V1.4 M7 1.2 L9.2 3.8" fill="none" stroke="#555" stroke-width="1.1"/></svg></th><th>店铺名称<svg class="srt" viewBox="0 0 10 10"><path d="M3 1 V8.6 M0.8 6.2 L3 8.8 M7 9 V1.4 M7 1.2 L9.2 3.8" fill="none" stroke="#555" stroke-width="1.1"/></svg></th><th>ACOS<svg class="srt" style="width:12px" viewBox="0 0 12 10"><path d="M1 1.2 H5 M1 5 H8 M1 9 H11.5" fill="none" stroke="#333" stroke-width="1.2"/></svg></th><th>广告花费($)<svg class="srt" viewBox="0 0 10 10"><path d="M3 1 V8.6 M0.8 6.2 L3 8.8 M7 9 V1.4 M7 1.2 L9.2 3.8" fill="none" stroke="#555" stroke-width="1.1"/></svg></th><th>广告销售额($)<svg class="srt" viewBox="0 0 10 10"><path d="M3 1 V8.6 M0.8 6.2 L3 8.8 M7 9 V1.4 M7 1.2 L9.2 3.8" fill="none" stroke="#555" stroke-width="1.1"/></svg></th></tr>
<tr><td>1</td><td></td><td>SP</td><td></td><td>15.85%</td><td>8.08</td><td>50.97</td></tr>
<tr><td>2</td><td></td><td>SP</td><td></td><td>17.01%</td><td>35.86</td><td>210.85</td></tr>
<tr><td>3</td><td></td><td>SP</td><td></td><td>21.75%</td><td>18.98</td><td>87.27</td></tr>
<tr><td>4</td><td></td><td>SP</td><td></td><td>28.41%</td><td>14.48</td><td>50.97</td></tr>
<tr><td>5</td><td></td><td>SP</td><td></td><td>36.79%</td><td>12.50</td><td>33.98</td></tr>
<tr><td>6</td><td></td><td>SP</td><td></td><td>37.30%</td><td>25.35</td><td>67.96</td></tr>
<tr><td></td><td></td><td></td><td></td><td></td><td></td><td></td></tr>
</table>
<div class="abs" style="left:827px;top:77px;width:5px;height:139px;background:#d8d8d8;border-radius:3px"></div>
</div>
<div class="panel" style="left:854px;top:543px;width:836px;height:300px;overflow:hidden">
<div class="abs" style="left:4.5px;top:10px;font-size:16px;font-weight:bold;line-height:24px;color:#111;white-space:nowrap">商品广告效果排行</div>
<div class="abs" style="left:0;top:42px;width:832px;height:1px;background:#e8ebf0"></div>
<table class="abs" style="left:0;top:42px;width:832px"><colgroup><col style="width:100px"><col style="width:122px"><col style="width:122px"><col style="width:122px"><col style="width:122px"><col style="width:122px"><col style="width:122px"></colgroup>
<tr><th style="border-right:none">序号<svg class="srt" viewBox="0 0 10 10"><path d="M3 1 V8.6 M0.8 6.2 L3 8.8 M7 9 V1.4 M7 1.2 L9.2 3.8" fill="none" stroke="#555" stroke-width="1.1"/></svg></th><th>商品主图<svg class="srt" viewBox="0 0 10 10"><path d="M3 1 V8.6 M0.8 6.2 L3 8.8 M7 9 V1.4 M7 1.2 L9.2 3.8" fill="none" stroke="#555" stroke-width="1.1"/></svg></th><th>ASIN<svg class="srt" viewBox="0 0 10 10"><path d="M3 1 V8.6 M0.8 6.2 L3 8.8 M7 9 V1.4 M7 1.2 L9.2 3.8" fill="none" stroke="#555" stroke-width="1.1"/></svg></th><th>店铺名称<svg class="srt" viewBox="0 0 10 10"><path d="M3 1 V8.6 M0.8 6.2 L3 8.8 M7 9 V1.4 M7 1.2 L9.2 3.8" fill="none" stroke="#555" stroke-width="1.1"/></svg></th><th>ACOS<svg class="srt" style="width:12px" viewBox="0 0 12 10"><path d="M1 1.2 H5 M1 5 H8 M1 9 H11.5" fill="none" stroke="#333" stroke-width="1.2"/></svg></th><th>广告花费($)<svg class="srt" viewBox="0 0 10 10"><path d="M3 1 V8.6 M0.8 6.2 L3 8.8 M7 9 V1.4 M7 1.2 L9.2 3.8" fill="none" stroke="#555" stroke-width="1.1"/></svg></th><th>广告销售额($)<svg class="srt" viewBox="0 0 10 10"><path d="M3 1 V8.6 M0.8 6.2 L3 8.8 M7 9 V1.4 M7 1.2 L9.2 3.8" fill="none" stroke="#555" stroke-width="1.1"/></svg></th></tr>
<tr><td>1</td><td></td><td></td><td></td><td>1.14%</td><td>1.60</td><td>139.90</td></tr>
<tr><td>2</td><td></td><td></td><td></td><td>1.80%</td><td>0.78</td><td>43.37</td></tr>
<tr><td>3</td><td></td><td></td><td></td><td>2.18%</td><td>0.60</td><td>27.58</td></tr>
<tr><td>4</td><td></td><td></td><td></td><td>2.76%</td><td>2.41</td><td>87.27</td></tr>
<tr><td>5</td><td></td><td></td><td></td><td>8.41%</td><td>1.16</td><td>13.79</td></tr>
<tr><td>6</td><td></td><td></td><td></td><td>9.59%</td><td>1.63</td><td>16.99</td></tr>
<tr><td></td><td></td><td></td><td></td><td></td><td></td><td></td></tr>
</table>
<div class="abs" style="left:827px;top:77px;width:5px;height:83px;background:#d8d8d8;border-radius:3px"></div>
</div>
<div class="mos"><i style="left:125px;top:626px;width:9px;height:12px;background:rgb(212,212,212)"></i><i style="left:134px;top:626px;width:12px;height:12px;background:rgb(214,214,214)"></i><i style="left:146px;top:626px;width:12px;height:12px;background:rgb(212,212,212)"></i><i style="left:158px;top:626px;width:12px;height:12px;background:rgb(216,216,216)"></i><i style="left:170px;top:626px;width:12px;height:12px;background:rgb(208,208,208)"></i><i style="left:182px;top:626px;width:12px;height:12px;background:rgb(210,210,210)"></i><i style="left:194px;top:626px;width:12px;height:12px;background:rgb(200,200,200)"></i><i style="left:125px;top:638px;width:12px;height:9px;background:rgb(244,244,244)"></i><i style="left:137px;top:638px;width:12px;height:9px;background:rgb(246,246,246)"></i><i style="left:149px;top:638px;width:12px;height:9px;background:rgb(246,246,246)"></i><i style="left:161px;top:638px;width:12px;height:9px;background:rgb(247,247,247)"></i><i style="left:173px;top:638px;width:12px;height:9px;background:rgb(246,246,246)"></i><i style="left:185px;top:638px;width:12px;height:9px;background:rgb(244,244,244)"></i><i style="left:197px;top:638px;width:12px;height:9px;background:rgb(246,246,246)"></i><i style="left:209px;top:638px;width:12px;height:9px;background:rgb(250,250,250)"></i><i style="left:122px;top:662px;width:12px;height:12px;background:rgb(184,184,184)"></i><i style="left:134px;top:662px;width:12px;height:12px;background:rgb(170,170,170)"></i><i style="left:146px;top:662px;width:12px;height:12px;background:rgb(190,190,190)"></i><i style="left:158px;top:662px;width:12px;height:12px;background:rgb(232,232,232)"></i><i style="left:170px;top:662px;width:12px;height:12px;background:rgb(212,212,212)"></i><i style="left:182px;top:662px;width:12px;height:12px;background:rgb(214,214,214)"></i><i style="left:194px;top:662px;width:12px;height:12px;background:rgb(210,210,210)"></i><i style="left:206px;top:662px;width:12px;height:12px;background:rgb(210,210,210)"></i><i style="left:218px;top:662px;width:12px;height:12px;background:rgb(236,236,236)"></i><i style="left:122px;top:692px;width:12px;height:6px;background:rgb(244,244,244)"></i><i style="left:134px;top:692px;width:12px;height:6px;background:rgb(242,242,242)"></i><i style="left:146px;top:692px;width:12px;height:6px;background:rgb(242,242,242)"></i><i style="left:158px;top:692px;width:12px;height:6px;background:rgb(242,242,242)"></i><i style="left:170px;top:692px;width:12px;height:6px;background:rgb(244,244,244)"></i><i style="left:122px;top:698px;width:12px;height:12px;background:rgb(180,180,180)"></i><i style="left:134px;top:698px;width:12px;height:12px;background:rgb(205,205,205)"></i><i style="left:146px;top:698px;width:12px;height:12px;background:rgb(196,196,196)"></i><i style="left:158px;top:698px;width:12px;height:12px;background:rgb(196,196,196)"></i><i style="left:170px;top:698px;width:12px;height:12px;background:rgb(205,205,205)"></i><i style="left:122px;top:724px;width:12px;height:10px;background:rgb(216,216,216)"></i><i style="left:134px;top:724px;width:12px;height:10px;background:rgb(220,220,220)"></i><i style="left:146px;top:724px;width:12px;height:10px;background:rgb(218,218,218)"></i><i style="left:158px;top:724px;width:12px;height:10px;background:rgb(224,224,224)"></i><i style="left:122px;top:734px;width:12px;height:12px;background:rgb(222,222,222)"></i><i style="left:134px;top:734px;width:12px;height:12px;background:rgb(220,220,220)"></i><i style="left:146px;top:734px;width:12px;height:12px;background:rgb(212,212,212)"></i><i style="left:158px;top:734px;width:12px;height:12px;background:rgb(222,222,222)"></i><i style="left:122px;top:758px;width:12px;height:12px;background:rgb(190,190,190)"></i><i style="left:134px;top:758px;width:12px;height:12px;background:rgb(192,192,192)"></i><i style="left:146px;top:758px;width:12px;height:12px;background:rgb(204,204,204)"></i><i style="left:158px;top:758px;width:12px;height:12px;background:rgb(200,200,200)"></i><i style="left:170px;top:758px;width:12px;height:12px;background:rgb(208,208,208)"></i><i style="left:122px;top:770px;width:12px;height:9px;background:rgb(242,242,242)"></i><i style="left:134px;top:770px;width:12px;height:9px;background:rgb(240,240,240)"></i><i style="left:146px;top:770px;width:12px;height:9px;background:rgb(238,238,238)"></i><i style="left:158px;top:770px;width:12px;height:9px;background:rgb(240,240,240)"></i><i style="left:170px;top:770px;width:12px;height:9px;background:rgb(242,242,242)"></i><i style="left:122px;top:794px;width:12px;height:12px;background:rgb(205,205,205)"></i><i style="left:134px;top:794px;width:12px;height:12px;background:rgb(208,208,208)"></i><i style="left:146px;top:794px;width:12px;height:12px;background:rgb(210,210,210)"></i><i style="left:158px;top:794px;width:12px;height:12px;background:rgb(210,210,210)"></i><i style="left:170px;top:794px;width:12px;height:12px;background:rgb(210,210,210)"></i><i style="left:182px;top:794px;width:12px;height:12px;background:rgb(210,210,210)"></i><i style="left:194px;top:794px;width:12px;height:12px;background:rgb(190,190,190)"></i><i style="left:206px;top:794px;width:12px;height:12px;background:rgb(248,248,248)"></i><i style="left:363px;top:626px;width:12px;height:12px;background:rgb(200,200,200)"></i><i style="left:375px;top:626px;width:12px;height:12px;background:rgb(188,188,188)"></i><i style="left:387px;top:626px;width:12px;height:12px;background:rgb(192,192,192)"></i><i style="left:399px;top:626px;width:12px;height:12px;background:rgb(226,226,226)"></i><i style="left:411px;top:626px;width:12px;height:12px;background:rgb(232,232,232)"></i><i style="left:363px;top:638px;width:12px;height:11px;background:rgb(238,238,238)"></i><i style="left:375px;top:638px;width:12px;height:11px;background:rgb(238,238,238)"></i><i style="left:387px;top:638px;width:12px;height:11px;background:rgb(248,248,248)"></i><i style="left:399px;top:638px;width:12px;height:11px;background:rgb(248,248,248)"></i><i style="left:411px;top:638px;width:12px;height:11px;background:rgb(248,248,248)"></i><i style="left:363px;top:662px;width:12px;height:12px;background:rgb(184,184,184)"></i><i style="left:375px;top:662px;width:12px;height:12px;background:rgb(172,172,172)"></i><i style="left:387px;top:662px;width:12px;height:12px;background:rgb(188,188,188)"></i><i style="left:399px;top:662px;width:12px;height:12px;background:rgb(222,222,222)"></i><i style="left:411px;top:662px;width:12px;height:12px;background:rgb(230,230,230)"></i><i style="left:363px;top:692px;width:12px;height:6px;background:rgb(244,244,244)"></i><i style="left:375px;top:692px;width:12px;height:6px;background:rgb(242,242,242)"></i><i style="left:387px;top:692px;width:12px;height:6px;background:rgb(244,244,244)"></i><i style="left:399px;top:692px;width:12px;height:6px;background:rgb(246,246,246)"></i><i style="left:411px;top:692px;width:12px;height:6px;background:rgb(248,248,248)"></i><i style="left:363px;top:698px;width:12px;height:12px;background:rgb(188,188,188)"></i><i style="left:375px;top:698px;width:12px;height:12px;background:rgb(186,186,186)"></i><i style="left:387px;top:698px;width:12px;height:12px;background:rgb(192,192,192)"></i><i style="left:399px;top:698px;width:12px;height:12px;background:rgb(224,224,224)"></i><i style="left:411px;top:698px;width:12px;height:12px;background:rgb(232,232,232)"></i><i style="left:363px;top:722px;width:12px;height:12px;background:rgb(216,216,216)"></i><i style="left:375px;top:722px;width:12px;height:12px;background:rgb(214,214,214)"></i><i style="left:387px;top:722px;width:12px;height:12px;background:rgb(216,216,216)"></i><i style="left:399px;top:722px;width:12px;height:12px;background:rgb(238,238,238)"></i><i style="left:411px;top:722px;width:12px;height:12px;background:rgb(238,238,238)"></i><i style="left:363px;top:734px;width:12px;height:12px;background:rgb(220,220,220)"></i><i style="left:375px;top:734px;width:12px;height:12px;background:rgb(220,220,220)"></i><i style="left:387px;top:734px;width:12px;height:12px;background:rgb(228,228,228)"></i><i style="left:399px;top:734px;width:12px;height:12px;background:rgb(236,236,236)"></i><i style="left:411px;top:734px;width:12px;height:12px;background:rgb(238,238,238)"></i><i style="left:363px;top:758px;width:12px;height:12px;background:rgb(198,198,198)"></i><i style="left:375px;top:758px;width:12px;height:12px;background:rgb(186,186,186)"></i><i style="left:387px;top:758px;width:12px;height:12px;background:rgb(192,192,192)"></i><i style="left:399px;top:758px;width:12px;height:12px;background:rgb(226,226,226)"></i><i style="left:411px;top:758px;width:12px;height:12px;background:rgb(232,232,232)"></i><i style="left:363px;top:770px;width:12px;height:9px;background:rgb(240,240,240)"></i><i style="left:375px;top:770px;width:12px;height:9px;background:rgb(240,240,240)"></i><i style="left:387px;top:770px;width:12px;height:9px;background:rgb(248,248,248)"></i><i style="left:399px;top:770px;width:12px;height:9px;background:rgb(248,248,248)"></i><i style="left:411px;top:770px;width:12px;height:9px;background:rgb(248,248,248)"></i><i style="left:363px;top:794px;width:12px;height:12px;background:rgb(184,184,184)"></i><i style="left:375px;top:794px;width:12px;height:12px;background:rgb(170,170,170)"></i><i style="left:387px;top:794px;width:12px;height:12px;background:rgb(186,186,186)"></i><i style="left:399px;top:794px;width:12px;height:12px;background:rgb(222,222,222)"></i><i style="left:411px;top:794px;width:12px;height:12px;background:rgb(228,228,228)"></i><i style="left:965px;top:626px;width:9px;height:12px;background:rgb(220,224,220)"></i><i style="left:974px;top:626px;width:12px;height:12px;background:rgb(170,182,168)"></i><i style="left:965px;top:638px;width:9px;height:12px;background:rgb(222,224,222)"></i><i style="left:974px;top:638px;width:12px;height:12px;background:rgb(180,186,178)"></i><i style="left:965px;top:650px;width:9px;height:12px;background:rgb(232,232,232)"></i><i style="left:974px;top:650px;width:12px;height:12px;background:rgb(214,212,210)"></i><i style="left:965px;top:662px;width:9px;height:12px;background:rgb(162,154,148)"></i><i style="left:974px;top:662px;width:12px;height:12px;background:rgb(100,86,72)"></i><i style="left:965px;top:674px;width:9px;height:12px;background:rgb(208,206,204)"></i><i style="left:974px;top:674px;width:12px;height:12px;background:rgb(180,176,170)"></i><i style="left:965px;top:686px;width:9px;height:12px;background:rgb(222,224,222)"></i><i style="left:974px;top:686px;width:12px;height:12px;background:rgb(162,164,160)"></i><i style="left:965px;top:698px;width:9px;height:12px;background:rgb(204,206,198)"></i><i style="left:974px;top:698px;width:12px;height:12px;background:rgb(182,182,168)"></i><i style="left:965px;top:710px;width:9px;height:12px;background:rgb(236,236,236)"></i><i style="left:974px;top:710px;width:12px;height:12px;background:rgb(200,200,198)"></i><i style="left:965px;top:722px;width:9px;height:12px;background:rgb(236,228,218)"></i><i style="left:974px;top:722px;width:12px;height:12px;background:rgb(226,214,176)"></i><i style="left:965px;top:734px;width:9px;height:12px;background:rgb(228,224,216)"></i><i style="left:974px;top:734px;width:12px;height:12px;background:rgb(184,168,140)"></i><i style="left:965px;top:746px;width:9px;height:12px;background:rgb(244,242,240)"></i><i style="left:974px;top:746px;width:12px;height:12px;background:rgb(230,224,218)"></i><i style="left:965px;top:758px;width:9px;height:12px;background:rgb(198,194,190)"></i><i style="left:974px;top:758px;width:12px;height:12px;background:rgb(116,102,90)"></i><i style="left:965px;top:770px;width:9px;height:12px;background:rgb(206,206,206)"></i><i style="left:974px;top:770px;width:12px;height:12px;background:rgb(132,126,120)"></i><i style="left:965px;top:782px;width:9px;height:12px;background:rgb(218,222,224)"></i><i style="left:974px;top:782px;width:12px;height:12px;background:rgb(222,226,228)"></i><i style="left:965px;top:794px;width:9px;height:12px;background:rgb(150,142,140)"></i><i style="left:974px;top:794px;width:12px;height:12px;background:rgb(108,108,108)"></i><i style="left:968px;top:806px;width:6px;height:6px;background:rgb(230,232,232)"></i><i style="left:974px;top:806px;width:12px;height:6px;background:rgb(182,196,208)"></i><i style="left:1085px;top:626px;width:9px;height:12px;background:rgb(226,226,226)"></i><i style="left:1094px;top:626px;width:12px;height:12px;background:rgb(212,212,212)"></i><i style="left:1106px;top:626px;width:12px;height:12px;background:rgb(212,212,212)"></i><i style="left:1118px;top:626px;width:12px;height:12px;background:rgb(214,214,214)"></i><i style="left:1130px;top:626px;width:12px;height:12px;background:rgb(210,210,210)"></i><i style="left:1142px;top:626px;width:12px;height:12px;background:rgb(212,212,212)"></i><i style="left:1085px;top:638px;width:9px;height:10px;background:rgb(248,248,248)"></i><i style="left:1094px;top:638px;width:12px;height:10px;background:rgb(246,246,246)"></i><i style="left:1106px;top:638px;width:12px;height:10px;background:rgb(246,246,246)"></i><i style="left:1118px;top:638px;width:12px;height:10px;background:rgb(247,247,247)"></i><i style="left:1130px;top:638px;width:12px;height:10px;background:rgb(248,248,248)"></i><i style="left:1142px;top:638px;width:12px;height:10px;background:rgb(247,247,247)"></i><i style="left:1085px;top:662px;width:9px;height:12px;background:rgb(212,212,212)"></i><i style="left:1094px;top:662px;width:12px;height:12px;background:rgb(200,200,200)"></i><i style="left:1106px;top:662px;width:12px;height:12px;background:rgb(200,200,200)"></i><i style="left:1118px;top:662px;width:12px;height:12px;background:rgb(206,206,206)"></i><i style="left:1130px;top:662px;width:12px;height:12px;background:rgb(206,206,206)"></i><i style="left:1142px;top:662px;width:12px;height:12px;background:rgb(206,206,206)"></i><i style="left:1085px;top:691px;width:9px;height:7px;background:rgb(246,246,246)"></i><i style="left:1094px;top:691px;width:12px;height:7px;background:rgb(244,244,244)"></i><i style="left:1106px;top:691px;width:12px;height:7px;background:rgb(244,244,244)"></i><i style="left:1118px;top:691px;width:12px;height:7px;background:rgb(244,244,244)"></i><i style="left:1130px;top:691px;width:12px;height:7px;background:rgb(242,242,242)"></i><i style="left:1142px;top:691px;width:12px;height:7px;background:rgb(246,246,246)"></i><i style="left:1085px;top:698px;width:9px;height:12px;background:rgb(220,220,220)"></i><i style="left:1094px;top:698px;width:12px;height:12px;background:rgb(212,212,212)"></i><i style="left:1106px;top:698px;width:12px;height:12px;background:rgb(210,210,210)"></i><i style="left:1118px;top:698px;width:12px;height:12px;background:rgb(214,214,214)"></i><i style="left:1130px;top:698px;width:12px;height:12px;background:rgb(222,222,222)"></i><i style="left:1142px;top:698px;width:12px;height:12px;background:rgb(216,216,216)"></i><i style="left:1087px;top:724px;width:7px;height:10px;background:rgb(236,236,236)"></i><i style="left:1094px;top:724px;width:12px;height:10px;background:rgb(234,234,234)"></i><i style="left:1106px;top:724px;width:12px;height:10px;background:rgb(228,228,228)"></i><i style="left:1118px;top:724px;width:12px;height:10px;background:rgb(232,232,232)"></i><i style="left:1130px;top:724px;width:12px;height:10px;background:rgb(236,236,236)"></i><i style="left:1142px;top:724px;width:12px;height:10px;background:rgb(238,238,238)"></i><i style="left:1087px;top:734px;width:7px;height:12px;background:rgb(238,238,238)"></i><i style="left:1094px;top:734px;width:12px;height:12px;background:rgb(236,236,236)"></i><i style="left:1106px;top:734px;width:12px;height:12px;background:rgb(232,232,232)"></i><i style="left:1118px;top:734px;width:12px;height:12px;background:rgb(234,234,234)"></i><i style="left:1130px;top:734px;width:12px;height:12px;background:rgb(238,238,238)"></i><i style="left:1142px;top:734px;width:12px;height:12px;background:rgb(240,240,240)"></i><i style="left:1085px;top:758px;width:9px;height:12px;background:rgb(220,220,220)"></i><i style="left:1094px;top:758px;width:12px;height:12px;background:rgb(212,212,212)"></i><i style="left:1106px;top:758px;width:12px;height:12px;background:rgb(212,212,212)"></i><i style="left:1118px;top:758px;width:12px;height:12px;background:rgb(212,212,212)"></i><i style="left:1130px;top:758px;width:12px;height:12px;background:rgb(212,212,212)"></i><i style="left:1142px;top:758px;width:12px;height:12px;background:rgb(214,214,214)"></i><i style="left:1154px;top:758px;width:12px;height:12px;background:rgb(238,238,238)"></i><i style="left:1085px;top:770px;width:9px;height:9px;background:rgb(248,248,248)"></i><i style="left:1094px;top:770px;width:12px;height:9px;background:rgb(246,246,246)"></i><i style="left:1106px;top:770px;width:12px;height:9px;background:rgb(246,246,246)"></i><i style="left:1118px;top:770px;width:12px;height:9px;background:rgb(247,247,247)"></i><i style="left:1130px;top:770px;width:12px;height:9px;background:rgb(248,248,248)"></i><i style="left:1142px;top:770px;width:12px;height:9px;background:rgb(247,247,247)"></i><i style="left:1154px;top:770px;width:12px;height:9px;background:rgb(250,250,250)"></i><i style="left:1085px;top:794px;width:9px;height:12px;background:rgb(214,214,214)"></i><i style="left:1094px;top:794px;width:12px;height:12px;background:rgb(204,204,204)"></i><i style="left:1106px;top:794px;width:12px;height:12px;background:rgb(204,204,204)"></i><i style="left:1118px;top:794px;width:12px;height:12px;background:rgb(206,206,206)"></i><i style="left:1130px;top:794px;width:12px;height:12px;background:rgb(206,206,206)"></i><i style="left:1142px;top:794px;width:12px;height:12px;background:rgb(206,206,206)"></i><i style="left:1154px;top:794px;width:12px;height:12px;background:rgb(248,248,248)"></i><i style="left:1205px;top:629px;width:9px;height:9px;background:rgb(224,224,224)"></i><i style="left:1214px;top:629px;width:12px;height:9px;background:rgb(184,184,184)"></i><i style="left:1226px;top:629px;width:12px;height:9px;background:rgb(190,190,190)"></i><i style="left:1238px;top:629px;width:12px;height:9px;background:rgb(222,222,222)"></i><i style="left:1250px;top:629px;width:12px;height:9px;background:rgb(226,226,226)"></i><i style="left:1205px;top:638px;width:9px;height:12px;background:rgb(244,244,244)"></i><i style="left:1214px;top:638px;width:12px;height:12px;background:rgb(240,240,240)"></i><i style="left:1226px;top:638px;width:12px;height:12px;background:rgb(246,246,246)"></i><i style="left:1238px;top:638px;width:12px;height:12px;background:rgb(248,248,248)"></i><i style="left:1250px;top:638px;width:12px;height:12px;background:rgb(248,248,248)"></i><i style="left:1208px;top:662px;width:6px;height:12px;background:rgb(210,210,210)"></i><i style="left:1214px;top:662px;width:12px;height:12px;background:rgb(166,166,166)"></i><i style="left:1226px;top:662px;width:12px;height:12px;background:rgb(178,178,178)"></i><i style="left:1238px;top:662px;width:12px;height:12px;background:rgb(218,218,218)"></i><i style="left:1250px;top:662px;width:12px;height:12px;background:rgb(214,214,214)"></i><i style="left:1210px;top:690px;width:4px;height:8px;background:rgb(250,250,250)"></i><i style="left:1214px;top:690px;width:12px;height:8px;background:rgb(240,240,240)"></i><i style="left:1226px;top:690px;width:12px;height:8px;background:rgb(246,246,246)"></i><i style="left:1238px;top:690px;width:12px;height:8px;background:rgb(246,246,246)"></i><i style="left:1250px;top:690px;width:12px;height:8px;background:rgb(248,248,248)"></i><i style="left:1210px;top:698px;width:4px;height:12px;background:rgb(222,222,222)"></i><i style="left:1214px;top:698px;width:12px;height:12px;background:rgb(182,182,182)"></i><i style="left:1226px;top:698px;width:12px;height:12px;background:rgb(186,186,186)"></i><i style="left:1238px;top:698px;width:12px;height:12px;background:rgb(222,222,222)"></i><i style="left:1250px;top:698px;width:12px;height:12px;background:rgb(220,220,220)"></i><i style="left:1205px;top:725px;width:9px;height:9px;background:rgb(240,240,240)"></i><i style="left:1214px;top:725px;width:12px;height:9px;background:rgb(212,212,212)"></i><i style="left:1226px;top:725px;width:12px;height:9px;background:rgb(212,212,212)"></i><i style="left:1238px;top:725px;width:12px;height:9px;background:rgb(236,236,236)"></i><i style="left:1250px;top:725px;width:12px;height:9px;background:rgb(234,234,234)"></i><i style="left:1208px;top:734px;width:6px;height:12px;background:rgb(232,232,232)"></i><i style="left:1214px;top:734px;width:12px;height:12px;background:rgb(218,218,218)"></i><i style="left:1226px;top:734px;width:12px;height:12px;background:rgb(226,226,226)"></i><i style="left:1238px;top:734px;width:12px;height:12px;background:rgb(236,236,236)"></i><i style="left:1250px;top:734px;width:12px;height:12px;background:rgb(236,236,236)"></i><i style="left:1210px;top:758px;width:4px;height:12px;background:rgb(222,222,222)"></i><i style="left:1214px;top:758px;width:12px;height:12px;background:rgb(184,184,184)"></i><i style="left:1226px;top:758px;width:12px;height:12px;background:rgb(186,186,186)"></i><i style="left:1238px;top:758px;width:12px;height:12px;background:rgb(222,222,222)"></i><i style="left:1250px;top:758px;width:12px;height:12px;background:rgb(222,222,222)"></i><i style="left:1210px;top:770px;width:4px;height:10px;background:rgb(246,246,246)"></i><i style="left:1214px;top:770px;width:12px;height:10px;background:rgb(240,240,240)"></i><i style="left:1226px;top:770px;width:12px;height:10px;background:rgb(246,246,246)"></i><i style="left:1238px;top:770px;width:12px;height:10px;background:rgb(248,248,248)"></i><i style="left:1250px;top:770px;width:12px;height:10px;background:rgb(248,248,248)"></i><i style="left:1210px;top:794px;width:4px;height:12px;background:rgb(218,218,218)"></i><i style="left:1214px;top:794px;width:12px;height:12px;background:rgb(166,166,166)"></i><i style="left:1226px;top:794px;width:12px;height:12px;background:rgb(178,178,178)"></i><i style="left:1238px;top:794px;width:12px;height:12px;background:rgb(220,220,220)"></i><i style="left:1250px;top:794px;width:12px;height:12px;background:rgb(216,216,216)"></i></div>
<div class="abs" style="left:1417px;top:752px;font-size:20px;letter-spacing:0.55px;line-height:26px;color:rgba(120,120,120,0.55);white-space:nowrap;z-index:40">激活 Windows</div>
<div class="abs" style="left:1417px;top:779px;font-size:15px;letter-spacing:0.45px;line-height:20px;color:rgba(120,120,120,0.55);white-space:nowrap;z-index:40">转到"设置"以激活 Windows。</div>
<div class="abs" style="left:0;top:824px;width:1706px;height:25px;background:#e9f0f8"></div>
<div class="abs" style="left:1700px;top:68px;width:6px;height:682px;background:#d3d8e2;border-radius:0 0 3px 3px"></div>
</div>
<div class="abs" style="left:0;top:918px;width:1920px;height:1px;background:linear-gradient(90deg,#333 0,#333 48px,#c4c4c4 48px,#c4c4c4 336px,#2c2626 336px,#2c2626 436px,#8c8c8c 436px,#8c8c8c 484px,#2c2626 484px);z-index:50"></div>
</body></html>
